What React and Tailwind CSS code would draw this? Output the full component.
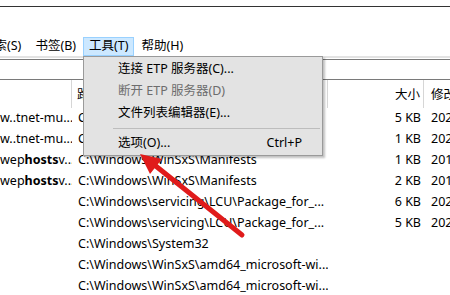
import React from 'react'

const font = "font-['Noto_Sans','Noto_Sans_CJK_SC',sans-serif]"

const rows = [
    { name: 'w..tnet-mu...', path: 'C', size: '5 KB', date: '202' },
    { name: 'w..tnet-mu...', path: 'C', size: '1 KB', date: '202' },
    { name: 'wep', bold: 'hosts', rest: 'v...', path: 'C:\\Windows\\WinSxS\\Manifests', size: '1 KB', date: '201' },
    { name: 'wep', bold: 'hosts', rest: 'v...', path: 'C:\\Windows\\WinSxS\\Manifests', size: '2 KB', date: '201' },
    { name: '', path: 'C:\\Windows\\servicing\\LCU\\Package_for_...', size: '6 KB', date: '202' },
    { name: '', path: 'C:\\Windows\\servicing\\LCU\\Package_for_...', size: '5 KB', date: '202' },
    { name: '', path: 'C:\\Windows\\System32', size: '', date: '' },
    { name: '', path: 'C:\\Windows\\WinSxS\\amd64_microsoft-wi...', size: '', date: '' },
    { name: '', path: 'C:\\Windows\\WinSxS\\amd64_microsoft-wi...', size: '', date: '' },
]

const menuItems = [
    { label: '连接 ETP 服务器(C)...' },
    { label: '断开 ETP 服务器(D)', disabled: true },
    { label: '文件列表编辑器(E)...' },
]

const App = () => {
    return (
        <div className={`relative w-[450px] h-[295px] overflow-hidden bg-white text-[12.5px] text-black ${font}`}>
            <div className="h-[6px]" />
            <div className="h-px bg-[#333]" />
            <div className="h-[30px]" />

            {/* menu bar */}
            <div className="flex h-[19px] items-center leading-none whitespace-nowrap">
                <div className="ml-[-25px] shrink-0 px-[7px]">搜索(S)</div>
                <div className="shrink-0 px-[7px]">书签(B)</div>
                <div className="flex h-[19px] shrink-0 items-center border border-[#99d1ff] bg-[#cce8ff] px-[5px]">工具(T)</div>
                <div className="shrink-0 px-[7px]">帮助(H)</div>
            </div>
            <div className="h-[2px] bg-[#e3e3e3]" />
            <div className="h-[1px]" />

            {/* search box */}
            <div className="h-[21px] border-y border-[#7a7a7a]" />

            {/* column header */}
            <div className="flex h-[28px] items-center whitespace-nowrap">
                <div className="h-full w-[72px] shrink-0 border-r border-[#d6d6d6]" />
                <div className="h-full w-[256px] shrink-0 border-r border-[#d6d6d6] pl-[5px] pt-[6px]">路径</div>
                <div className="h-full w-[96px] shrink-0 border-r border-[#d6d6d6] pr-[3px] pt-[6px] text-right">大小</div>
                <div className="h-full shrink-0 pl-[7px] pt-[6px]">修改日期</div>
            </div>

            {/* rows */}
            {rows.map((r, i) => (
                <div key={i} className="flex h-[21px] items-center whitespace-nowrap">
                    <div className="w-[72px] shrink-0 overflow-hidden">
                        {r.name}
                        {r.bold && <span className="font-bold">{r.bold}</span>}
                        {r.rest}
                    </div>
                    <div className="w-[256px] shrink-0 overflow-hidden pl-[6px]">{r.path}</div>
                    <div className="w-[96px] shrink-0 pr-[3px] text-right">{r.size}</div>
                    <div className="shrink-0 pl-[7px]">{r.date}</div>
                </div>
            ))}

            {/* dropdown menu */}
            <div className="absolute left-[83px] top-[56px] w-[240px] border border-[#9a9a9a] bg-[#e3e3e3] py-[1px] shadow-[2px_2px_2px_rgba(0,0,0,0.25)]">
                {menuItems.map((m) => (
                    <div
                        key={m.label}
                        className={`flex h-[22px] items-center pl-[34px] ${m.disabled ? 'text-[#6d6d6d]' : ''}`}
                    >
                        {m.label}
                    </div>
                ))}
                <div className="flex h-[8px] items-center pl-[29px] pr-[2px]">
                    <div className="h-px w-full bg-[#bdbdbd]" />
                </div>
                <div className="flex h-[22px] items-center justify-between pl-[34px] pr-[20px]">
                    <span>选项(O)...</span>
                    <span>Ctrl+P</span>
                </div>
            </div>

            {/* red arrow */}
            <svg className="absolute inset-0" width="450" height="295" viewBox="0 0 450 295">
                <line x1="242" y1="235" x2="152" y2="163" stroke="#e01b1b" strokeWidth="5" strokeLinecap="round" />
                <polygon points="140,154 150,174 162,159" fill="#e01b1b" />
            </svg>
        </div>
    )
}

export default App
